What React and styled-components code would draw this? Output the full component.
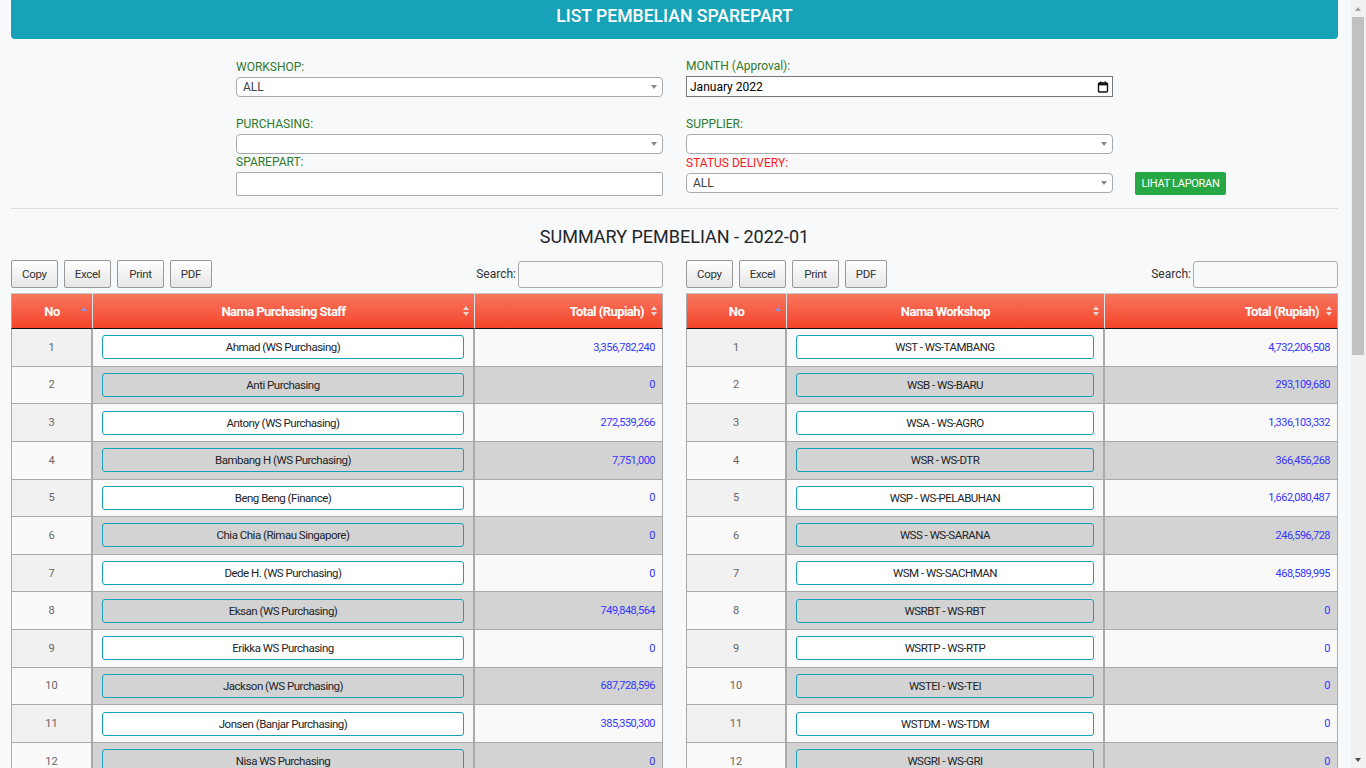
import React from "react";
import styled, { createGlobalStyle } from "styled-components";

const GlobalStyle = createGlobalStyle`
  html, body { margin: 0; padding: 0; }
  body {
    background: #f8f9fa;
    font-family: Roboto, "Liberation Sans", Arial, sans-serif;
    color: #212529;
  }
  * { box-sizing: border-box; }
`;

/* Browser-style scrollbar overlay on the right edge */
const ScrollRail = styled.div`
  position: fixed;
  top: 0;
  right: 0;
  width: 15px;
  height: 100vh;
  background: #f1f1f1;
  z-index: 10;
`;

const RailArrow = styled.span`
  position: absolute;
  left: 4px;
  ${(p) => (p.$down ? "bottom: 6px;" : "top: 7px;")}
  width: 0;
  height: 0;
  border-left: 3.5px solid transparent;
  border-right: 3.5px solid transparent;
  ${(p) =>
    p.$down ? "border-top: 4px solid #505050;" : "border-bottom: 4px solid #a3a3a3;"}
`;

const RailThumb = styled.span`
  position: absolute;
  left: 1px;
  right: 2px;
  top: 17px;
  height: 338px;
  background: #c1c1c1;
`;

const Page = styled.div`
  padding: 0 28px 40px 11px;
`;

const TitleBar = styled.header`
  height: 39px;
  background: #17a2b8;
  border-radius: 0 0 4px 4px;
  display: flex;
  justify-content: center;
  padding-top: 5px;
`;

const Title = styled.h1`
  margin: 0;
  color: #fff;
  font-size: 17.6px;
  line-height: 22px;
  font-weight: 500;
`;

const FilterGrid = styled.div`
  display: grid;
  grid-template-columns: 427px 427px auto;
  column-gap: 23px;
  margin-left: 225px;
  padding-top: 20px;
  align-items: end;
`;

const Field = styled.div`
  display: flex;
  flex-direction: column;
  margin-bottom: ${(p) => p.$mb || 0}px;
`;

const Label = styled.label`
  font-size: 12px;
  line-height: 14px;
  margin-bottom: 3px;
  color: ${(p) => (p.$red ? "#ff1a1a" : "#2f7a2a")};
`;

const SelectBox = styled.div`
  position: relative;
  height: 20px;
  background: #fff;
  border: 1px solid #aaa;
  border-radius: 4px;
  font-size: 12px;
  line-height: 18px;
  color: #444;
  padding-left: 6px;
`;

const Caret = styled.span`
  position: absolute;
  right: 5px;
  top: 7px;
  width: 0;
  height: 0;
  border-left: 3px solid transparent;
  border-right: 3px solid transparent;
  border-top: 4px solid #888;
`;

const MonthBox = styled.div`
  height: 21px;
  background: #fff;
  border: 1px solid #767676;
  display: flex;
  align-items: center;
  justify-content: space-between;
  padding: 0 3px 0 3px;
  font-size: 12px;
  color: #000;
`;

const TextInput = styled.input`
  height: 24px;
  border: 1px solid #aaa;
  border-radius: 2px;
  background: #fff;
  font: inherit;
  font-size: 12px;
`;

const ReportButton = styled.button`
  justify-self: start;
  width: 91px;
  height: 23px;
  margin-left: -1px;
  margin-bottom: 1px;
  background: #28a745;
  border: 0;
  border-radius: 2px;
  color: #fff;
  font-family: inherit;
  font-size: 11px;
  letter-spacing: -0.3px;
  padding: 0;
`;

const Rule = styled.hr`
  margin: 12px 0 0;
  border: 0;
  border-top: 1px solid #dcdfe2;
`;

const Summary = styled.h2`
  margin: 17px 0 0;
  text-align: center;
  font-size: 18px;
  line-height: 22px;
  font-weight: 400;
  color: #212529;
`;

const Tables = styled.div`
  display: grid;
  grid-template-columns: 652px 652px;
  column-gap: 23px;
  margin-top: 12px;
`;

const Toolbar = styled.div`
  display: flex;
  align-items: center;
  height: 28px;
`;

const ToolButton = styled.button`
  height: 28px;
  margin-right: 6px;
  padding: 0 ${(p) => p.$px || 10}px;
  border: 1px solid #999;
  border-radius: 2px;
  background: linear-gradient(to bottom, #ffffff 0%, #e6e6e6 100%);
  font-family: inherit;
  font-size: 11.5px;
  letter-spacing: -0.3px;
  color: #333;
`;

const SearchLabel = styled.label`
  margin-left: auto;
  display: flex;
  align-items: center;
  font-size: 12px;
  color: #333;
`;

const SearchInput = styled.input`
  margin-left: 2px;
  width: 145px;
  height: 27px;
  border: 1px solid #aaa;
  border-radius: 3px;
  background: transparent;
`;

const Table = styled.table`
  width: 100%;
  margin-top: 5px;
  border-collapse: separate;
  border-spacing: 0;
  table-layout: fixed;
  border-top: 1px solid #c8c8c8;
`;

const Th = styled.th`
  height: 35px;
  padding: 0 ${(p) => (p.$align === "right" ? 18 : 10)}px 0 10px;
  position: relative;
  background: linear-gradient(to bottom, #f8765f 0%, #f4452a 100%);
  color: #fff;
  font-size: 13px;
  letter-spacing: -0.55px;
  font-weight: 700;
  text-align: ${(p) => p.$align || "center"};
  border-bottom: 1px solid #111;
  border-left: 1px solid ${(p) => (p.$first ? "#aaa" : "#d5e3ea")};
  border-right: ${(p) => (p.$last ? "1px solid #aaa" : "0")};
`;

const SortIcon = styled.svg`
  position: absolute;
  right: 4px;
  top: 11px;
`;

const Td = styled.td`
  height: 37.64px;
  padding: 0 ${(p) => (p.$align === "right" ? 7 : 9)}px 0 9px;
  font-size: 11px;
  letter-spacing: ${(p) => (p.$tight ? -0.5 : 0)}px;
  text-align: ${(p) => p.$align || "center"};
  color: ${(p) => p.$color || "#212529"};
  background: ${(p) => p.$bg};
  border-bottom: 1px solid #aaa;
  border-left: 1px solid #aaa;
  border-right: 1px solid #aaa;
`;

const NameBox = styled.div`
  height: 24px;
  line-height: 22px;
  border: 1px solid #17a2b8;
  border-radius: 3px;
  background: ${(p) => (p.$odd ? "#fff" : "#d3d3d3")};
  font-size: 11.5px;
  letter-spacing: -0.5px;
  color: #212529;
  text-align: center;
  white-space: nowrap;
  overflow: hidden;
`;

const leftRows = [
  ["Ahmad (WS Purchasing)", "3,356,782,240"],
  ["Anti Purchasing", "0"],
  ["Antony (WS Purchasing)", "272,539,266"],
  ["Bambang H (WS Purchasing)", "7,751,000"],
  ["Beng Beng (Finance)", "0"],
  ["Chia Chia (Rimau Singapore)", "0"],
  ["Dede H. (WS Purchasing)", "0"],
  ["Eksan (WS Purchasing)", "749,848,564"],
  ["Erikka WS Purchasing", "0"],
  ["Jackson (WS Purchasing)", "687,728,596"],
  ["Jonsen (Banjar Purchasing)", "385,350,300"],
  ["Nisa WS Purchasing", "0"],
  ["Rahmat (WS Purchasing)", "0"],
  ["Rina (Finance)", "0"],
  ["Rudi (WS Purchasing)", "0"],
  ["Santi WS Purchasing", "0"],
  ["Siti (Banjar Purchasing)", "0"],
  ["Susanto (WS Purchasing)", "0"],
  ["Tono (WS Purchasing)", "0"],
  ["Wati WS Purchasing", "0"],
  ["Wawan (WS Purchasing)", "0"],
  ["Yanti (Finance)", "0"],
  ["Yudi (WS Purchasing)", "0"],
  ["Yusuf (WS Purchasing)", "0"],
  ["Zainal (WS Purchasing)", "0"],
];

const rightRows = [
  ["WST - WS-TAMBANG", "4,732,206,508"],
  ["WSB - WS-BARU", "293,109,680"],
  ["WSA - WS-AGRO", "1,336,103,332"],
  ["WSR - WS-DTR", "366,456,268"],
  ["WSP - WS-PELABUHAN", "1,662,080,487"],
  ["WSS - WS-SARANA", "246,596,728"],
  ["WSM - WS-SACHMAN", "468,589,995"],
  ["WSRBT - WS-RBT", "0"],
  ["WSRTP - WS-RTP", "0"],
  ["WSTEI - WS-TEI", "0"],
  ["WSTDM - WS-TDM", "0"],
  ["WSGRI - WS-GRI", "0"],
  ["WSKM - WS-KM", "0"],
  ["WSBJ - WS-BANJAR", "0"],
];

function AscIcon() {
  return (
    <SortIcon width="8" height="12" viewBox="0 0 8 12">
      <path d="M4 2 L7 6 L1 6 Z" fill="#8a93dd" />
    </SortIcon>
  );
}

function BothIcon() {
  return (
    <SortIcon width="8" height="12" viewBox="0 0 8 12">
      <path d="M4 1 L7 5 L1 5 Z" fill="#e4d7d3" />
      <path d="M4 11 L7 7 L1 7 Z" fill="#e4d7d3" />
    </SortIcon>
  );
}

function CalendarIcon() {
  return (
    <svg width="12" height="12" viewBox="0 0 12 12">
      <rect x="1.5" y="2" width="9" height="9" rx="1" fill="none" stroke="#111" strokeWidth="1.4" />
      <rect x="1.5" y="2" width="9" height="2.4" fill="#111" />
      <rect x="3" y="0.5" width="1.4" height="2" fill="#111" />
      <rect x="7.6" y="0.5" width="1.4" height="2" fill="#111" />
    </svg>
  );
}

function DataPanel({ nameHeader, widths, rows }) {
  return (
    <div>
      <Toolbar>
        <ToolButton>Copy</ToolButton>
        <ToolButton>Excel</ToolButton>
        <ToolButton $px={11}>Print</ToolButton>
        <ToolButton $px={10}>PDF</ToolButton>
        <SearchLabel>
          Search:
          <SearchInput type="text" />
        </SearchLabel>
      </Toolbar>
      <Table>
        <colgroup>
          {widths.map((w, i) => (
            <col key={i} style={{ width: w }} />
          ))}
        </colgroup>
        <thead>
          <tr>
            <Th $first>
              No
              <AscIcon />
            </Th>
            <Th>
              {nameHeader}
              <BothIcon />
            </Th>
            <Th $align="right" $last>
              Total (Rupiah)
              <BothIcon />
            </Th>
          </tr>
        </thead>
        <tbody>
          {rows.map(([name, total], i) => {
            const odd = i % 2 === 0;
            const rest = odd ? "#f9f9f9" : "#d3d3d3";
            return (
              <tr key={i}>
                <Td $color="#666" $bg={odd ? "#f1f1f1" : "#fafafa"}>
                  {i + 1}
                </Td>
                <Td $bg={rest}>
                  <NameBox $odd={odd}>{name}</NameBox>
                </Td>
                <Td $tight $align="right" $color="#3535ff" $bg={rest}>
                  {total}
                </Td>
              </tr>
            );
          })}
        </tbody>
      </Table>
    </div>
  );
}

export default function App() {
  return (
    <>
      <GlobalStyle />
      <ScrollRail aria-hidden="true">
        <RailArrow />
        <RailThumb />
        <RailArrow $down />
      </ScrollRail>
      <Page>
        <TitleBar>
          <Title>LIST PEMBELIAN SPAREPART</Title>
        </TitleBar>

        <FilterGrid>
          <Field $mb={20}>
            <Label>WORKSHOP:</Label>
            <SelectBox>
              ALL
              <Caret />
            </SelectBox>
          </Field>
          <Field $mb={20}>
            <Label>MONTH (Approval):</Label>
            <MonthBox>
              <span>January 2022</span>
              <CalendarIcon />
            </MonthBox>
          </Field>
          <div />

          <Field $mb={1}>
            <Label>PURCHASING:</Label>
            <SelectBox>
              &nbsp;
              <Caret />
            </SelectBox>
          </Field>
          <Field $mb={1}>
            <Label>SUPPLIER:</Label>
            <SelectBox>
              &nbsp;
              <Caret />
            </SelectBox>
          </Field>
          <div />

          <Field>
            <Label>SPAREPART:</Label>
            <TextInput type="text" />
          </Field>
          <Field $mb={3}>
            <Label $red>STATUS DELIVERY:</Label>
            <SelectBox>
              ALL
              <Caret />
            </SelectBox>
          </Field>
          <ReportButton>LIHAT LAPORAN</ReportButton>
        </FilterGrid>

        <Rule />

        <Summary>SUMMARY PEMBELIAN - 2022-01</Summary>

        <Tables>
          <DataPanel
            nameHeader="Nama Purchasing Staff"
            widths={["81px", "382px", "189px"]}
            rows={leftRows}
          />
          <DataPanel
            nameHeader="Nama Workshop"
            widths={["100px", "318px", "234px"]}
            rows={rightRows}
          />
        </Tables>
      </Page>
    </>
  );
}
